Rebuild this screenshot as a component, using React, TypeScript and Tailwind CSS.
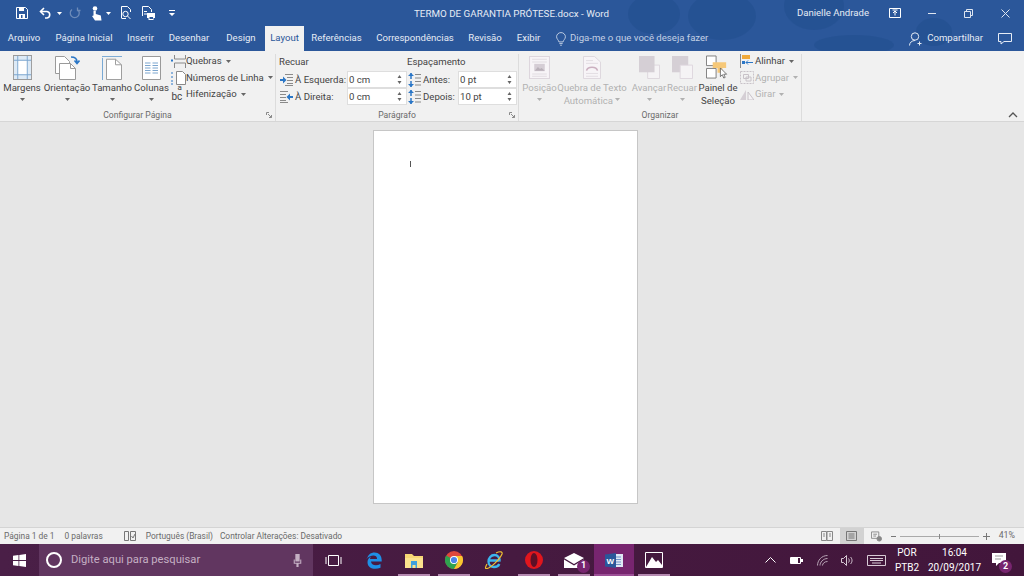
import type { ReactNode } from 'react';

const caret = (
  <svg width="5" height="3" viewBox="0 0 5 3" className="inline-block shrink-0">
    <path d="M0 0h5L2.500 3z" fill="currentColor" />
  </svg>
);

function Qat({ w, children }: { w: number; children?: ReactNode }) {
  return (
    <div className="flex h-full items-center justify-center" style={{ width: w }}>
      {children}
    </div>
  );
}

function TitleBar() {
  return (
    <div className="relative flex h-[26px] items-center text-white">
      <Qat w={14} />
      <Qat w={16}>
        <svg width="12" height="12" viewBox="0 0 12 12">
          <path d="M.5.500h9l2 2v9H.5z" fill="none" stroke="#fff" />
          <path d="M3 1h5v3H3zM3 7h6v4H3z" fill="#fff" />
          <path d="M5 8h1.500v3H5z" fill="#2b579a" />
        </svg>
      </Qat>
      <Qat w={9} />
      <Qat w={13}>
        <svg width="13" height="12" viewBox="0 0 13 12" fill="none" stroke="#fff" strokeWidth="1.600">
          <path d="M5 1 1.500 4.500 5 8" />
          <path d="M2 4.500h6a3.300 3.300 0 0 1 0 6.500H6" />
        </svg>
      </Qat>
      <Qat w={5} />
      <Qat w={5}>{caret}</Qat>
      <Qat w={6} />
      <Qat w={13}>
        <svg width="12" height="12" viewBox="0 0 12 12" fill="none" stroke="#6d8bb9" strokeWidth="1.300">
          <path d="M3 2.500A4.500 4.500 0 1 0 8.500 2.500M8.500 .5v3h3" />
        </svg>
      </Qat>
      <Qat w={9} />
      <Qat w={14}>
        <svg width="12" height="15" viewBox="0 0 12 15" fill="#fff">
          <circle cx="4" cy="2.500" r="2.300" />
          <path d="M2.500 5h2.300v3l5 1.500 .7 5H4L1 10l1.500-.5z" />
        </svg>
      </Qat>
      <Qat w={2} />
      <Qat w={5}>{caret}</Qat>
      <Qat w={8} />
      <Qat w={14}>
        <svg width="14" height="14" viewBox="0 0 14 14" fill="none" stroke="#fff">
          <path d="M2.500 12.500V.5h6l3 3V6" />
          <circle cx="6.500" cy="8" r="2.700" />
          <path d="m8.500 10 3 3M7 12.500h-4" />
        </svg>
      </Qat>
      <Qat w={8} />
      <Qat w={15}>
        <svg width="15" height="15" viewBox="0 0 15 15">
          <path d="M1.500 10V.5h6l3 3V6" fill="none" stroke="#fff" />
          <path d="M3 5h3v1H3zM3 7.500h3v1H3z" fill="#fff" />
          <path d="M6 7h8v5h-1.500v2h-5v-2H6z" fill="#fff" />
          <path d="M8.500 11h3.500v2H8.500z" fill="#2b579a" />
        </svg>
      </Qat>
      <Qat w={13} />
      <Qat w={6}>
        <svg width="6" height="6" viewBox="0 0 6 6" fill="#fff">
          <path d="M0 0h6v1H0zM0 3h6L3 6z" />
        </svg>
      </Qat>
      <div className="absolute left-[414px] top-[6px] text-[9.800px] leading-[15px] text-[#e6ecf5]">
        TERMO DE GARANTIA PRÓTESE.docx - Word
      </div>
      <div className="ml-auto flex h-full items-center">
        <span className="text-[9.600px] text-[#e6ecf5]">Danielle Andrade</span>
        <div className="ml-[20px]">
          <svg width="12" height="10" viewBox="0 0 12 10" fill="none" stroke="#fff">
            <path d="M.5.500h11v9H.5z" />
            <path d="M6 7.500V4M4 5l2-2 2 2M3.500 2h5" />
          </svg>
        </div>
        <div className="ml-[27px] h-px w-[8px] bg-[#dfe6f1]" />
        <div className="ml-[28px]">
          <svg width="9" height="9" viewBox="0 0 9 9" fill="none" stroke="#dfe6f1">
            <path d="M.5 2.500h6v6h-6zM2.500 2.500v-2h6v6h-2" />
          </svg>
        </div>
        <div className="ml-[28px] mr-[14px]">
          <svg width="9" height="9" viewBox="0 0 9 9" stroke="#dfe6f1">
            <path d="m.5.500 8 8M8.500.500l-8 8" />
          </svg>
        </div>
      </div>
    </div>
  );
}

const tabs = [
  { label: 'Arquivo', w: 48 },
  { label: 'Página Inicial', w: 72 },
  { label: 'Inserir', w: 41 },
  { label: 'Desenhar', w: 56 },
  { label: 'Design', w: 48 },
];
const tabsAfter = [
  { label: 'Referências', w: 65 },
  { label: 'Correspondências', w: 92 },
  { label: 'Revisão', w: 48 },
  { label: 'Exibir', w: 39 },
];

function TabRow() {
  return (
    <div className="flex h-[25px] items-stretch text-[#e6ecf5]">
      {tabs.map((t) => (
        <div key={t.label} className="flex items-center justify-center text-[9.600px]" style={{ width: t.w }}>
          {t.label}
        </div>
      ))}
      <div className="flex w-[39px] items-center justify-center bg-[#f1f1f1] text-[9.600px] text-[#2b579a]">Layout</div>
      {tabsAfter.map((t) => (
        <div key={t.label} className="flex items-center justify-center text-[9.600px]" style={{ width: t.w }}>
          {t.label}
        </div>
      ))}
      <div className="ml-[8px] flex items-center gap-[4px] text-[9.600px] text-[#c3d0e4]">
        <svg width="10" height="14" viewBox="0 0 12 16" fill="none" stroke="#d5dfed">
          <path d="M3.500 11.500C3 9 .7 8 .7 5.300a5.300 5 0 0 1 10.600 0c0 2.700-2.300 3.700-2.800 6.200zM4 13.500h4M5 15.500h2" />
        </svg>
        <span>Diga-me o que você deseja fazer</span>
      </div>
      <div className="ml-auto flex items-center">
        <svg width="14" height="14" viewBox="0 0 14 14" fill="none" stroke="#e6ecf5">
          <circle cx="6" cy="4.500" r="3.700" />
          <path d="M.5 13.500c0-3 2.500-5 5.500-5M10.500 9.500v4M8.500 11.500h4" />
        </svg>
        <span className="ml-[4px] text-[9.600px]">Compartilhar</span>
        <div className="ml-[15px] mr-[12px]">
          <svg width="14" height="12" viewBox="0 0 14 12" fill="none" stroke="#e6ecf5">
            <path d="M.5.500h13v8H6l-3 2.500V8.500H.5z" />
          </svg>
        </div>
      </div>
    </div>
  );
}

function BigButton({
  w,
  label,
  icon,
  dim,
  arrow = true,
}: {
  w: number;
  label: ReactNode;
  icon: ReactNode;
  dim?: boolean;
  arrow?: boolean;
}) {
  return (
    <div
      className={`flex shrink-0 flex-col items-center text-[9.600px] leading-[13px] ${dim ? 'text-[#b1b1b1]' : 'text-[#444444]'}`}
      style={{ width: w }}
    >
      <div className="flex h-[27px] items-center justify-center">{icon}</div>
      <div className="whitespace-nowrap text-center">{label}</div>
      {arrow && <div className={`mt-[4px] flex h-[3px] items-center ${dim ? 'text-[#b1b1b1]' : 'text-[#666666]'}`}>{caret}</div>}
    </div>
  );
}

function SmallButton({ icon, label, dim, indent = 0 }: { icon: ReactNode; label: string; dim?: boolean; indent?: number }) {
  return (
    <div className={`flex h-[16.500px] items-center whitespace-nowrap text-[9.600px] ${dim ? 'text-[#b1b1b1]' : 'text-[#444444]'}`}>
      <div className="flex w-[15px] shrink-0 justify-center">{icon}</div>
      <span style={{ marginLeft: indent }}>{label}</span>
      <span className={`ml-[4px] flex ${dim ? 'text-[#b1b1b1]' : 'text-[#666666]'}`}>{caret}</span>
    </div>
  );
}

function Launcher() {
  return (
    <svg width="6" height="6" viewBox="0 0 6 6" fill="none" stroke="#8a8a8a" className="absolute bottom-[3px] right-[3px]">
      <path d="M.5 3V.5H3M2 2l3.500 3.500M3 5.500h2.500V3" />
    </svg>
  );
}

function Group({ w, label, children, launcher }: { w: number; label: string; children: ReactNode; launcher?: boolean }) {
  return (
    <div className="relative flex h-full shrink-0 flex-col border-r border-[#dcdcdc]" style={{ width: w }}>
      <div className="flex min-h-0 flex-1">{children}</div>
      <div className="flex h-[12px] items-center justify-center text-[8.600px] leading-[12px] text-[#6a6a6a]">{label}</div>
      {launcher && <Launcher />}
    </div>
  );
}

function SpinBox({ value, w }: { value: string; w: number }) {
  return (
    <div
      className="flex h-[17px] shrink-0 items-center justify-between border border-[#dedede] bg-white pl-[1px] pr-[4px] text-[9.600px] text-[#444444]"
      style={{ width: w }}
    >
      <span className="pt-[2px]">{value}</span>
      <svg width="5" height="11" viewBox="0 0 5 11" fill="#666666">
        <path d="M2.500 1 4.500 4h-4zM.5 7h4l-2 3z" />
      </svg>
    </div>
  );
}

const Margins = (
  <svg width="19" height="25" viewBox="0 0 20 24" preserveAspectRatio="none">
    <path d="M.5.500h19v23H.5z" fill="#fff" stroke="#9a9a9a" />
    <path d="M1 1h18v4H1zM1 19h18v4H1zM1 1h4v22H1zM15 1h4v22h-4z" fill="#c6dcf0" fillOpacity=".6" />
    <path d="M5 1v22M15 1v22M1 5h18M1 19h18" stroke="#7ca6cf" fill="none" />
  </svg>
);
const Orient = (
  <svg width="25" height="24" viewBox="0 0 25 24">
    <path d="M.5.500h9l5 5v12H.5z" fill="#fff" stroke="#9a9a9a" />
    <path d="M4.500 7.500h11l5 5v11h-16z" fill="#fff" stroke="#9a9a9a" />
    <path d="M15.500 7.500v5h5" fill="none" stroke="#9a9a9a" />
    <path d="M16 1c4 0 6 1 6 5M19.500 4.500l2.500 3 2.500-3" fill="none" stroke="#2a76c6" strokeWidth="1.600" />
  </svg>
);
const Size = (
  <svg width="20" height="24" viewBox="0 0 20 26" preserveAspectRatio="none">
    <path d="M0 .5h20" stroke="#74a5d2" />
    <path d="M.5 2v24" stroke="#74a5d2" />
    <path d="M4.500 3.500h9l6 6v16h-15z" fill="#fff" stroke="#9a9a9a" />
    <path d="M13.500 3.500v6h6" fill="none" stroke="#9a9a9a" />
  </svg>
);
const Cols = (
  <svg width="19" height="24" viewBox="0 0 19 24">
    <path d="M.5.500h18v23H.5z" fill="#fff" stroke="#9a9a9a" />
    <path
      d="M3 7h5.500M10.500 7H16M3 9.500h5.500M10.500 9.500H16M3 12h5.500M10.500 12H16M3 14.500h5.500M10.500 14.500H16M3 17h5.500M10.500 17H16"
      stroke="#7ca6cf"
    />
  </svg>
);
const Breaks = (
  <svg width="15" height="13" viewBox="0 0 15 13" fill="none">
    <path d="M3.500 0v4h11V0M3.500 13V8h11v5" stroke="#8a8a8a" />
    <path d="M0 4.500h2v2H0z" fill="#2a76c6" />
  </svg>
);
const LineNums = (
  <svg width="15" height="14" viewBox="0 0 15 14" fill="none">
    <path d="M5.500.5h6l3 3v10h-9z" fill="#fff" stroke="#8a8a8a" />
    <path d="M1 1v2M1 5v2M1 9v2M1 12v2" stroke="#2a76c6" />
  </svg>
);
const Hyphen = (
  <span className="relative block h-[14px] w-[14px] text-[10px] leading-[10px] text-[#444444]">
    <span className="absolute left-[6px] top-[-3px] text-[8px] leading-[8px]">a</span>
    <span className="absolute left-[0px] top-[5px]">bc</span>
  </span>
);
const IndentIn = (
  <svg width="13" height="12" viewBox="0 0 13 12">
    <path d="M5 .5h8M7 3.500h6M7 6.500h6M7 9.500h6M5 11.500h8" stroke="#8a8a8a" />
    <path d="M0 5h3V2.500L6.500 6 3 9.500V7H0z" fill="#2a76c6" />
  </svg>
);
const IndentOut = (
  <svg width="13" height="12" viewBox="0 0 13 12">
    <path d="M0 .5h8M0 3.500h6M0 6.500h6M0 9.500h6M0 11.500h8" stroke="#8a8a8a" />
    <path d="M13 5h-3V2.500L6.500 6 10 9.500V7h3z" fill="#2a76c6" />
  </svg>
);
const SpacingBefore = (
  <svg width="13" height="14" viewBox="0 0 13 14">
    <path d="M3 0v6M3 8v6" stroke="#2a76c6" strokeWidth="1.500" />
    <path d="M0 3l3-3 3 3zM0 11l3 3 3-3z" fill="#2a76c6" />
    <path d="M7 1.500h6M7 5h6M7 8.500h6M7 12h6" stroke="#8a8a8a" />
  </svg>
);
const Position = (
  <svg width="21" height="23" viewBox="0 0 20 25" preserveAspectRatio="none">
    <path d="M.5.500h19v24H.5z" fill="#f7f4f7" stroke="#ddd6dd" />
    <path d="M3 3h14v1H3zM3 6h14v1H3zM3 19h14v1H3zM3 21.500h14v1H3z" fill="#e2dce2" />
    <path d="M5 8.500h10v8H5z" fill="#d5cdd5" />
    <path d="m5.500 16 3-4 2 2 1.500-1 3 3z" fill="#b9b0b9" />
  </svg>
);
const Wrap = (
  <svg width="18" height="23" viewBox="0 0 18 25" preserveAspectRatio="none">
    <path d="M.5.500h11l6 6v18H.5z" fill="#f7f4f7" stroke="#ddd6dd" />
    <path d="M3 5h7M3 8h12M3 19h12M3 22h12" stroke="#e2dce2" />
    <path d="M3.500 16c1-5 10-5 11 0" fill="none" stroke="#cbb0c0" strokeWidth="1.500" />
  </svg>
);
const Forward = (
  <svg width="21" height="23" viewBox="0 0 23 24" preserveAspectRatio="none">
    <path d="M9.500 9.500h13v14h-13z" fill="#f5f3f5" stroke="#ddd6dd" />
    <path d="M0 0h17v17H0z" fill="#d5cfd5" />
  </svg>
);
const Backward = (
  <svg width="21" height="23" viewBox="0 0 22 24" preserveAspectRatio="none">
    <path d="M0 0h17v17H0z" fill="#d5cfd5" />
    <path d="M8.500 9.500h13v14h-13z" fill="#f5f3f5" stroke="#ddd6dd" />
  </svg>
);
const Selection = (
  <svg width="24" height="25" viewBox="0 0 25 25">
    <path d="M.5.500h10v10H.5zM.5 13.500h10v10H.5z" fill="#fff" stroke="#7d7d7d" />
    <path d="M7 7h14v6h-4v5h-5v-5H7z" fill="#f6c878" />
    <path d="M15 13v9l2-2 1.500 3.500 1.500-.7-1.500-3.300h3z" fill="#fff" stroke="#555" strokeWidth=".8" />
  </svg>
);
const AlignIcon = (
  <svg width="13" height="14" viewBox="0 0 13 14">
    <path d="M.5 0v14" stroke="#8a8a8a" />
    <path d="M2 1h8v4H2z" fill="#f0a93a" />
    <path d="M2 7h3v3H2z" fill="#2a76c6" />
    <path d="M13 8.500H6M8 6.500l-2 2 2 2" fill="none" stroke="#2a76c6" />
  </svg>
);
const GroupIcon = (
  <svg width="14" height="13" viewBox="0 0 14 13" fill="none" stroke="#c8c2c8">
    <path d="M.5.500h13v12H.5z" strokeDasharray="2 1" />
    <path d="M3.500 3.500h5v4h-5zM6 6h5v4H6z" />
  </svg>
);
const RotateIcon = (
  <svg width="14" height="11" viewBox="0 0 14 11">
    <path d="M0 11 6 1v10z" fill="#d5cfd5" />
    <path d="M8 11V3l6 8z" fill="#f5f3f5" stroke="#c8c2c8" />
  </svg>
);

function Ribbon() {
  return (
    <div className="relative flex h-[70px] bg-[#f1f1f1] pt-[3px]">
      <Group w={276} label="Configurar Página" launcher>
        <BigButton w={44} label="Margens" icon={Margins} />
        <BigButton w={46} label="Orientação" icon={Orient} />
        <BigButton w={44} label="Tamanho" icon={Size} />
        <BigButton w={35} label="Colunas" icon={Cols} />
        <div className="ml-[2px] mt-[-1px] flex flex-col">
          <SmallButton icon={Breaks} label="Quebras" />
          <SmallButton icon={LineNums} label="Números de Linha" />
          <SmallButton icon={Hyphen} label="Hifenização" />
        </div>
      </Group>
      <Group w={243} label="Parágrafo" launcher>
        <div className="flex w-full flex-col pl-[3px] text-[9.600px] text-[#444444]">
          <div className="flex h-[17px] items-center">
            <span className="w-[128px]">Recuar</span>
            <span>Espaçamento</span>
          </div>
          <div className="flex h-[17px] items-center">
            <div className="flex w-[14px] justify-center">{IndentIn}</div>
            <span className="ml-[2px] w-[52px] whitespace-nowrap pt-[2px]">À Esquerda:</span>
            <SpinBox value="0 cm" w={60} />
            <div className="flex w-[14px] justify-center">{SpacingBefore}</div>
            <span className="ml-[2px] w-[35px] pt-[2px]">Antes:</span>
            <SpinBox value="0 pt" w={59} />
          </div>
          <div className="flex h-[17px] items-center">
            <div className="flex w-[14px] justify-center">{IndentOut}</div>
            <span className="ml-[2px] w-[52px] whitespace-nowrap pt-[2px]">À Direita:</span>
            <SpinBox value="0 cm" w={60} />
            <div className="flex w-[14px] justify-center">{SpacingBefore}</div>
            <span className="ml-[2px] w-[35px] pt-[2px]">Depois:</span>
            <SpinBox value="10 pt" w={59} />
          </div>
        </div>
      </Group>
      <Group w={283} label="Organizar">
        <div className="w-[3px] shrink-0" />
        <BigButton w={35} label="Posição" icon={Position} dim />
        <BigButton
          w={70}
          dim
          arrow={false}
          icon={Wrap}
          label={
            <>
              Quebra de Texto
              <br />
              Automática <span className="relative top-[-2px] text-[#b1b1b1]">{caret}</span>
            </>
          }
        />
        <div className="w-[4px] shrink-0" />
        <BigButton w={36} label="Avançar" icon={Forward} dim />
        <BigButton w={30} label="Recuar" icon={Backward} dim />
        <BigButton
          w={42}
          arrow={false}
          icon={Selection}
          label={
            <>
              Painel de
              <br />
              Seleção
            </>
          }
        />
        <div className="mt-[-1px] flex flex-col">
          <SmallButton icon={AlignIcon} label="Alinhar" indent={1} />
          <SmallButton icon={GroupIcon} label="Agrupar" dim indent={1} />
          <SmallButton icon={RotateIcon} label="Girar" dim indent={1} />
        </div>
      </Group>
      <svg width="10" height="6" viewBox="0 0 10 6" fill="none" stroke="#555" strokeWidth="1.300" className="absolute bottom-[3px] right-[6px]">
        <path d="m1 5 4-4 4 4" />
      </svg>
    </div>
  );
}

function Canvas() {
  return (
    <div className="flex h-[406px] justify-center border-t border-[#d6d6d6] bg-[#e6e6e6] pt-[8px]">
      <div className="ml-[-13px] h-[374px] w-[265px] border border-[#c6c6c6] bg-white pl-[36px] pt-[30px]">
        <div className="h-[6px] w-px bg-[#555555]" />
      </div>
    </div>
  );
}

function StatusBar() {
  return (
    <div className="flex h-[17px] items-center border-t border-[#d4d4d4] bg-[#f1f1f1] pl-[4px] text-[8.400px] text-[#6a6a6a]">
      <span>Página 1 de 1</span>
      <span className="ml-[10px]">0 palavras</span>
      <svg width="12" height="10" viewBox="0 0 12 10" fill="none" stroke="#777" className="ml-[21px]">
        <path d="M.5.500h4v9h-4zM6.500.500h5v9h-5zM7.500 5 9 7l2-4" />
      </svg>
      <span className="ml-[10px]">Português (Brasil)</span>
      <span className="ml-[7px]">Controlar Alterações: Desativado</span>
      <div className="ml-auto flex h-full items-center">
        <svg width="12" height="10" viewBox="0 0 12 10" fill="none" stroke="#888">
          <path d="M.5.500h5v9h-5zM6 .5h5.500v9H6zM2 3h2M2 5h2M8 3h2M8 5h2" />
        </svg>
        <div className="ml-[7px] flex h-full w-[24px] items-center justify-center bg-[#d2d2d2]">
          <svg width="11" height="10" viewBox="0 0 11 10" fill="none" stroke="#777">
            <path d="M.5.500h10v9H.5zM2.500 3h6M2.500 5h6M2.500 7h6" />
          </svg>
        </div>
        <svg width="11" height="11" viewBox="0 0 12 11" fill="none" stroke="#888" className="ml-[7px]">
          <path d="M.5.500h8v7h-8zM2.500 3h4M2.500 5h3" />
          <circle cx="9" cy="8" r="2.500" fill="#888" />
        </svg>
        <div className="ml-[9px] h-px w-[5px] bg-[#777]" />
        <div className="relative ml-[4px] flex h-px w-[79px] bg-[#aaaaaa]">
          <div className="absolute left-[39px] top-[-2px] h-[5px] w-px bg-[#888888]" />
        </div>
        <svg width="7" height="7" viewBox="0 0 7 7" stroke="#777" className="ml-[4px]">
          <path d="M3.500 0v7M0 3.500h7" />
        </svg>
        <span className="ml-[9px] mr-[9px] text-[8.800px]">41%</span>
      </div>
    </div>
  );
}

function TaskItem({ children, open, active }: { children: ReactNode; open?: boolean; active?: boolean }) {
  return (
    <div className={`relative flex h-full w-[40px] items-center justify-center ${active ? 'bg-[#77256f]' : ''}`}>
      {children}
      {open && <div className={`absolute bottom-0 h-[2px] ${active ? 'inset-x-0 bg-[#9c4f96]' : 'inset-x-[4px] bg-[#b58ab1]'}`} />}
    </div>
  );
}

const EdgeIcon = (
  <svg width="16" height="17" viewBox="0 0 16 17" fill="none">
    <path
      d="M1 7C2 2.500 5 .5 8.500.5 13 .5 16 3.500 15.700 9.500H5c0 3.500 5 5 9.500 2.500v3.700c-5 2.200-13 1.500-13-5.700 0-2.500 1.500-4.500 3.500-5.500-.5.700-1 1.500-1 2.500h7c.3-4-5.500-5-10.500-0z"
      fill="#1e90e6"
    />
  </svg>
);
const FolderIcon = (
  <svg width="18" height="15" viewBox="0 0 18 15">
    <path d="M0 1h7l2 2h9v12H0z" fill="#f7d774" />
    <path d="M0 5h18v10H0z" fill="#fbe28d" />
    <path d="M6 8h6v7h-1.500v-3h-3v3H6z" fill="#3ea0dd" />
  </svg>
);
const ChromeIcon = (
  <svg width="18" height="18" viewBox="0 0 18 18">
    <circle cx="9" cy="9" r="9" fill="#e0493b" />
    <path d="M9 9 1.200 4.500A9 9 0 0 0 9 18l4-7z" fill="#2fa24f" />
    <path d="M9 5h8.100A9 9 0 0 1 9 18l4-7z" fill="#f8c630" />
    <circle cx="9" cy="9" r="4" fill="#fff" />
    <circle cx="9" cy="9" r="3.100" fill="#4b84e8" />
  </svg>
);
const IeIcon = (
  <svg width="20" height="18" viewBox="0 0 20 18" fill="none">
    <path d="M15 9.500H5.500M15.500 10.500c.5-4-2-6.500-5-6.500-3.500 0-6 3-6 6.500S7 16 10 16c2.500 0 4.500-1 5.300-3" stroke="#3bb6ee" strokeWidth="2.300" />
    <path d="M3 13C1 16.500 1 18 3 17.500 7 17 16 8 18 3c.8-2.500-2-3-6-1" stroke="#f1c232" strokeWidth="1.200" />
  </svg>
);
const OperaIcon = (
  <svg width="18" height="18" viewBox="0 0 18 18">
    <ellipse cx="9" cy="9" rx="9" ry="9" fill="#e0161d" />
    <ellipse cx="9" cy="9" rx="3.500" ry="7" fill="#5c1026" />
  </svg>
);
const MailIcon = (
  <div className="relative">
    <svg width="20" height="15" viewBox="0 0 20 15" fill="#fff">
      <path d="m0 5 10-5 10 5-10 6zM0 6.500l10 6 10-6V15H0z" />
    </svg>
    <div className="absolute left-[13px] top-[7px] flex h-[13px] w-[13px] items-center justify-center rounded-full bg-[#77256f] text-[9px] font-bold text-white">1</div>
  </div>
);
const WordIcon = (
  <svg width="18" height="15" viewBox="0 0 18 15">
    <path d="M7 1h11v13H7z" fill="#dfe8f5" />
    <path d="M9 4h7M9 6.500h7M9 9h7M9 11.500h7" stroke="#6f93c9" />
    <path d="M0 1.500 11 0v15L0 13.500z" fill="#2b579a" />
    <text x="1.500" y="11" fontSize="8" fontWeight="700" fill="#fff" fontFamily="Liberation Sans">W</text>
  </svg>
);
const PhotosIcon = (
  <svg width="18" height="16" viewBox="0 0 18 16">
    <path d="M.5.500h17v15H.5z" fill="none" stroke="#fff" />
    <path d="M1 15 7 5l4 5 2-2 4 5v2z" fill="#fff" />
  </svg>
);

function Taskbar() {
  return (
    <div className="flex h-[32px] items-center bg-gradient-to-r from-[#4a1f47] via-[#461a40] to-[#42163b] text-white">
      <div className="flex h-full w-[39px] items-center justify-center">
        <svg width="13" height="13" viewBox="0 0 13 13" fill="#fff">
          <path d="M0 1.800 5.500 1v5H0zM6.300.9 13 0v6H6.300zM0 7h5.500v5L0 11.200zM6.300 7H13v6l-6.700-.9z" />
        </svg>
      </div>
      <div className="flex h-full w-[274px] items-center bg-[#613660] pl-[7px]">
        <div className="h-[16px] w-[16px] rounded-full border-2 border-white" />
        <span className="ml-[9px] text-[11.200px] text-[#c4afc3]">Digite aqui para pesquisar</span>
        <svg width="9" height="13" viewBox="0 0 8 12" className="ml-auto mr-[11px]" fill="#c4afc3">
          <path d="M2 0h4v7H2zM.5 5H1.500v3h5V5h1v4H.5zM3 9h2v3H3z" />
        </svg>
      </div>
      <div className="flex h-full w-[41px] items-center justify-center">
        <svg width="17" height="11" viewBox="0 0 17 11" fill="none" stroke="#fff">
          <path d="M3.500.5h10v10h-10zM1 2v7M16 2v7" />
        </svg>
      </div>
      <TaskItem>{EdgeIcon}</TaskItem>
      <TaskItem open>{FolderIcon}</TaskItem>
      <TaskItem open>{ChromeIcon}</TaskItem>
      <TaskItem>{IeIcon}</TaskItem>
      <TaskItem open>{OperaIcon}</TaskItem>
      <TaskItem open>{MailIcon}</TaskItem>
      <TaskItem open active>{WordIcon}</TaskItem>
      <TaskItem open>{PhotosIcon}</TaskItem>
      <div className="ml-auto flex h-full items-center text-[10px] leading-[15px]">
        <svg width="11" height="6" viewBox="0 0 11 6" fill="none" stroke="#fff">
          <path d="m.5 5.500 5-5 5 5" />
        </svg>
        <svg width="13" height="7" viewBox="0 0 13 7" className="ml-[14px]">
          <path d="M.5.500h10v6H.5z" fill="none" stroke="#fff" />
          <path d="M1 1h7v5H1zM11 2h2v3h-2z" fill="#fff" />
        </svg>
        <svg width="11" height="11" viewBox="0 0 11 11" fill="none" stroke="#b8a5b6" className="ml-[14px]">
          <path d="M.5 10.500c0-5 4-10 10-10M3 10.500c0-3 3-7 7.500-7M5.500 10.500c0-2 2-4 5-4" />
        </svg>
        <svg width="13" height="11" viewBox="0 0 13 11" fill="none" stroke="#d8cbd6" className="ml-[13px]">
          <path d="M.5 3.500h2l3-3v10l-3-3h-2zM7.500 3.500c1 1 1 3 0 4M9.500 2c2 2 2 5 0 7" />
        </svg>
        <svg width="19" height="11" viewBox="0 0 19 11" fill="none" stroke="#d8cbd6" className="ml-[13px]">
          <path d="M.5.500h18v10H.5zM3 3.500h13M3 5.500h13M5 8h9" />
        </svg>
        <div className="ml-[9px] w-[24px] text-center">
          POR
          <br />
          PTB2
        </div>
        <div className="ml-[7px] w-[57px] text-center">
          16:04
          <br />
          20/09/2017
        </div>
        <div className="relative ml-[9px] mr-[18px]">
          <svg width="14" height="14" viewBox="0 0 14 14">
            <path d="M0 0h14v10H7l-3 3v-3H0z" fill="#fff" />
            <path d="M3 3h8M3 6h6" stroke="#999" />
          </svg>
          <div className="absolute left-[7px] top-[7px] flex h-[13px] w-[13px] items-center justify-center rounded-full bg-[#77256f] text-[9px] font-bold">2</div>
        </div>
      </div>
    </div>
  );
}

export default function App() {
  return (
    <div className="h-[576px] w-[1024px] overflow-hidden font-['Roboto',sans-serif]">
      <div className="relative h-[51px] overflow-hidden bg-[#2b579a]">
        <svg width="420" height="51" viewBox="0 0 420 51" className="absolute right-0 top-0" fill="#1f4a8a" fillOpacity=".4">
          <ellipse cx="50" cy="14" rx="26" ry="20" />
          <ellipse cx="118" cy="16" rx="34" ry="24" />
          <ellipse cx="210" cy="6" rx="30" ry="24" />
          <ellipse cx="330" cy="32" rx="18" ry="14" />
          <ellipse cx="250" cy="45" rx="40" ry="10" />
        </svg>
        <div className="relative">
          <TitleBar />
          <TabRow />
        </div>
      </div>
      <Ribbon />
      <Canvas />
      <StatusBar />
      <Taskbar />
    </div>
  );
}
